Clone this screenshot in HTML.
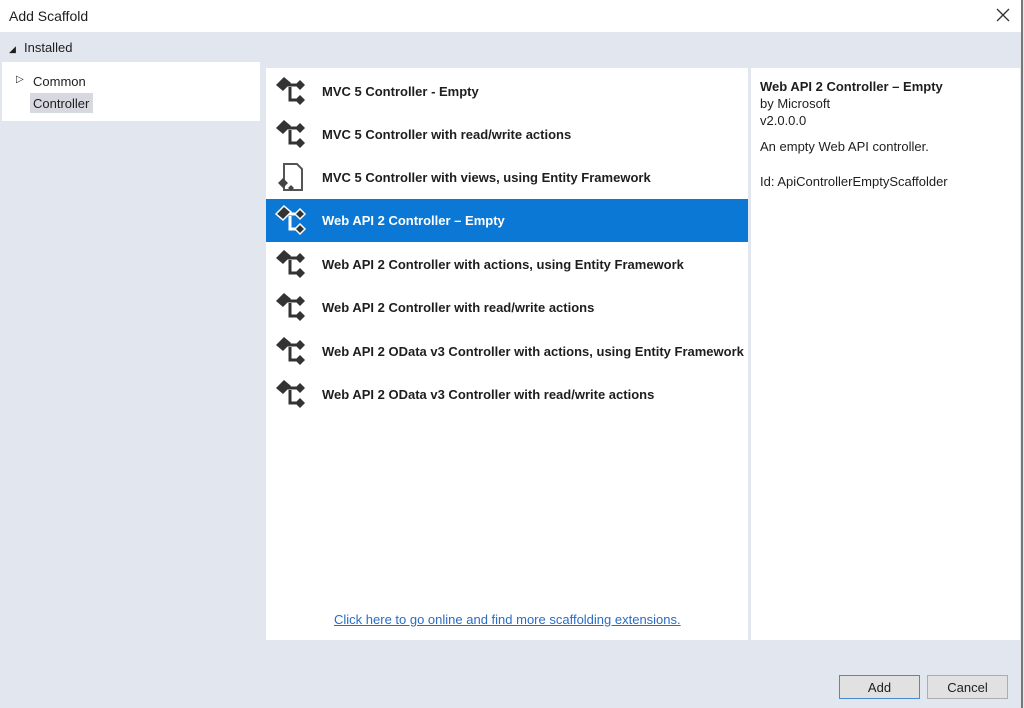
<!DOCTYPE html>
<html><head><style>
body{margin:0;width:1024px;height:708px;background:#e1e6ef;font-family:"Liberation Sans",sans-serif;position:relative;overflow:hidden;font-size:13px;color:#1e1e1e}
.abs{position:absolute}
.title{left:0;top:0;width:1021px;height:32px;background:#fff}
.row{position:absolute;left:266px;width:482px;height:43px}
.row span{position:absolute;left:56px;top:14px;font-weight:bold;font-size:13px;color:#1e1e1e}
.row svg{position:absolute;left:9px;top:5px}
.sel{background:#0a78d4}
.sel span{color:#fff}
.btn{position:absolute;top:675px;height:24px;background:#e1e1e1;border:1px solid #adadad;text-align:center;line-height:24px;font-size:13px;box-sizing:border-box}
</style></head><body>
<svg width="0" height="0" style="position:absolute"><defs>
<g id="ic">
<path d="M10 10 H26 M15 12 V25 H26" stroke="#333" stroke-width="3" fill="none"/>
<path d="M1 10 L9 2 L16 8 L8 16 Z" fill="#333"/>
<path d="M20 10 L25 5 L30 10 L25 15 Z" fill="#333"/>
<path d="M20 25 L25 20 L30 25 L25 30 Z" fill="#333"/>
</g></defs></svg>
<div class="abs title"></div>
<div class="abs" style="left:9px;top:8px;font-size:14px">Add Scaffold</div>
<svg class="abs" style="left:996px;top:8px" width="14" height="14"><path d="M1 1 L13 13 M13 1 L1 13" stroke="#333" stroke-width="1.3"/></svg>
<div class="abs" style="left:1021px;top:0;width:2px;height:708px;background:#777"></div>
<div class="abs" style="left:9px;top:44px;font-size:9px">◢</div>
<div class="abs" style="left:24px;top:40px;font-size:13px">Installed</div>
<div class="abs" style="left:2px;top:62px;width:258px;height:59px;background:#fff"></div>
<div class="abs" style="left:16px;top:74px;font-size:10px">▷</div>
<div class="abs" style="left:33px;top:74px">Common</div>
<div class="abs" style="left:30px;top:93px;width:63px;height:20px;background:#d6d9e0"></div>
<div class="abs" style="left:33px;top:96px">Controller</div>
<div class="abs" style="left:266px;top:68px;width:482px;height:572px;background:#fff"></div>
<div class="abs" style="left:751px;top:68px;width:269px;height:572px;background:#fff"></div>
<div class="row" style="top:70px"><svg width="32" height="32"><use href="#ic"/></svg><span>MVC 5 Controller - Empty</span></div>
<div class="row" style="top:113px"><svg width="32" height="32"><use href="#ic"/></svg><span>MVC 5 Controller with read/write actions</span></div>
<div class="row" style="top:156px"><svg width="32" height="32"><path d="M9 3 H22 L27 8 V29 H9 Z" fill="#fff" stroke="#555" stroke-width="2"/><path d="M3 22 L8 17 L13 22 L8 27 Z M13 27 L16 24 L19 27 L16 30 Z" fill="#444"/></svg><span>MVC 5 Controller with views, using Entity Framework</span></div>
<div class="row sel" style="top:199px"><svg width="32" height="32"><path d="M10 10 H26 M15 12 V25 H26" stroke="#fff" stroke-width="3" fill="none"/><path d="M1 10 L9 2 L16 8 L8 16 Z M20 10 L25 5 L30 10 L25 15 Z M20 25 L25 20 L30 25 L25 30 Z" fill="#333" stroke="#fff" stroke-width="1.5"/></svg><span>Web API 2 Controller – Empty</span></div>
<div class="row" style="top:243px"><svg width="32" height="32"><use href="#ic"/></svg><span>Web API 2 Controller with actions, using Entity Framework</span></div>
<div class="row" style="top:286px"><svg width="32" height="32"><use href="#ic"/></svg><span>Web API 2 Controller with read/write actions</span></div>
<div class="row" style="top:330px"><svg width="32" height="32"><use href="#ic"/></svg><span>Web API 2 OData v3 Controller with actions, using Entity Framework</span></div>
<div class="row" style="top:373px"><svg width="32" height="32"><use href="#ic"/></svg><span>Web API 2 OData v3 Controller with read/write actions</span></div>
<div class="abs" style="left:334px;top:612px;color:#2a6cc4;text-decoration:underline">Click here to go online and find more scaffolding extensions.</div>
<div class="abs" style="left:760px;top:79px;font-weight:bold">Web API 2 Controller – Empty</div>
<div class="abs" style="left:760px;top:96px">by Microsoft</div>
<div class="abs" style="left:760px;top:113px">v2.0.0.0</div>
<div class="abs" style="left:760px;top:139px">An empty Web API controller.</div>
<div class="abs" style="left:760px;top:174px">Id: ApiControllerEmptyScaffolder</div>
<div class="btn" style="left:839px;width:81px;border-color:#4a8ad0">Add</div>
<div class="btn" style="left:927px;width:81px">Cancel</div>
</body></html>
